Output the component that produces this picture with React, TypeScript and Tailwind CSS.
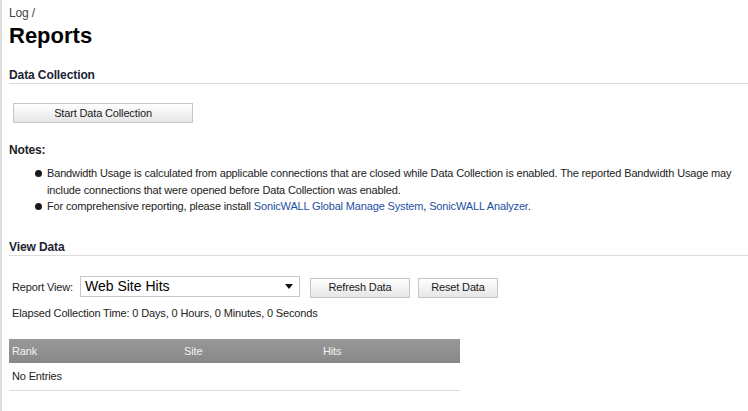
import React from 'react';

const font = { fontFamily: '"Liberation Sans", Arial, sans-serif' };

const Btn: React.FC<{ label: string; className?: string }> = ({ label, className = '' }) => (
  <button
    className={`h-[20px] border border-[#c6c6c6] bg-gradient-to-b from-white to-[#e6e6e6] text-[11px] tracking-[-0.15px] text-[#1a1a1a] ${className}`}
  >
    {label}
  </button>
);

const SectionTitle: React.FC<{ title: string }> = ({ title }) => (
  <div className="ml-[7px] border-b border-[#dcdcdc] pb-[1px] text-[12px] font-bold leading-[14px] tracking-[-0.1px] text-[#1c2333]">
    {title}
  </div>
);

const Bullet = () => (
  <span className="flex w-[12px] shrink-0 pt-[5px]">
    <span className="h-[7px] w-[7px] rounded-full bg-[#1a1a1a]" />
  </span>
);

export default function App() {
  return (
    <div className="min-h-[411px] w-[748px] border-l-2 border-[#dedede] bg-white text-[11px] tracking-[-0.15px] text-[#222]" style={font}>
      <div className="pl-[7px] pt-[4px] text-[12px] text-[#444]">Log /</div>
      <h1 className="pl-[7px] text-[22px] font-bold leading-[28px] tracking-normal text-black">Reports</h1>

      <div className="mt-[18px]">
        <SectionTitle title="Data Collection" />
      </div>
      <div className="pl-[11px] pt-[19px]">
        <Btn label="Start Data Collection" className="w-[180px]" />
      </div>

      <div className="mt-[18px] pl-[7px] text-[12px] font-bold text-[#222]">Notes:</div>
      <ul className="mt-[6px] pl-[33px] pr-[8px] leading-[16.5px]">
        <li className="flex">
          <Bullet />
          <span>
            Bandwidth Usage is calculated from applicable connections that are closed while Data Collection is enabled. The reported Bandwidth Usage may include connections that were opened before Data Collection was enabled.
          </span>
        </li>
        <li className="flex">
          <Bullet />
          <span>
            For comprehensive reporting, please install{' '}
            <a className="text-[#1d4fa5]">SonicWALL Global Manage System</a>,{' '}
            <a className="text-[#1d4fa5]">SonicWALL Analyzer</a>.
          </span>
        </li>
      </ul>

      <div className="mt-[25px]">
        <SectionTitle title="View Data" />
      </div>

      <div className="mt-[20px] flex items-start pl-[10px]">
        <span className="mr-[7px] mt-[3px]">Report View:</span>
        <div className="flex h-[21px] w-[220px] items-center justify-between border border-[#c8c8c8] pl-[4px] pr-[6px] text-[14px] tracking-normal text-black">
          <span>Web Site Hits</span>
          <svg width="8" height="5" viewBox="0 0 8 5">
            <path d="M0 0h8L4 5z" fill="#111" />
          </svg>
        </div>
        <Btn label="Refresh Data" className="ml-[10px] mt-[2px] w-[100px]" />
        <Btn label="Reset Data" className="ml-[8px] mt-[2px] w-[80px]" />
      </div>

      <div className="mt-[7px] pl-[10px]">Elapsed Collection Time: 0 Days, 0 Hours, 0 Minutes, 0 Seconds</div>

      <div className="ml-[7px] mt-[18px] w-[451px]">
        <div className="flex h-[24px] items-center bg-gradient-to-b from-[#989898] to-[#888888] text-[11px] text-[#f2f2f2]">
          <span className="w-[175px] pl-[3px]">Rank</span>
          <span className="w-[139px]">Site</span>
          <span>Hits</span>
        </div>
        <div className="flex h-[28px] items-center border-b border-[#dcdcdc] pl-[3px] text-[11px]">No Entries</div>
      </div>
    </div>
  );
}
